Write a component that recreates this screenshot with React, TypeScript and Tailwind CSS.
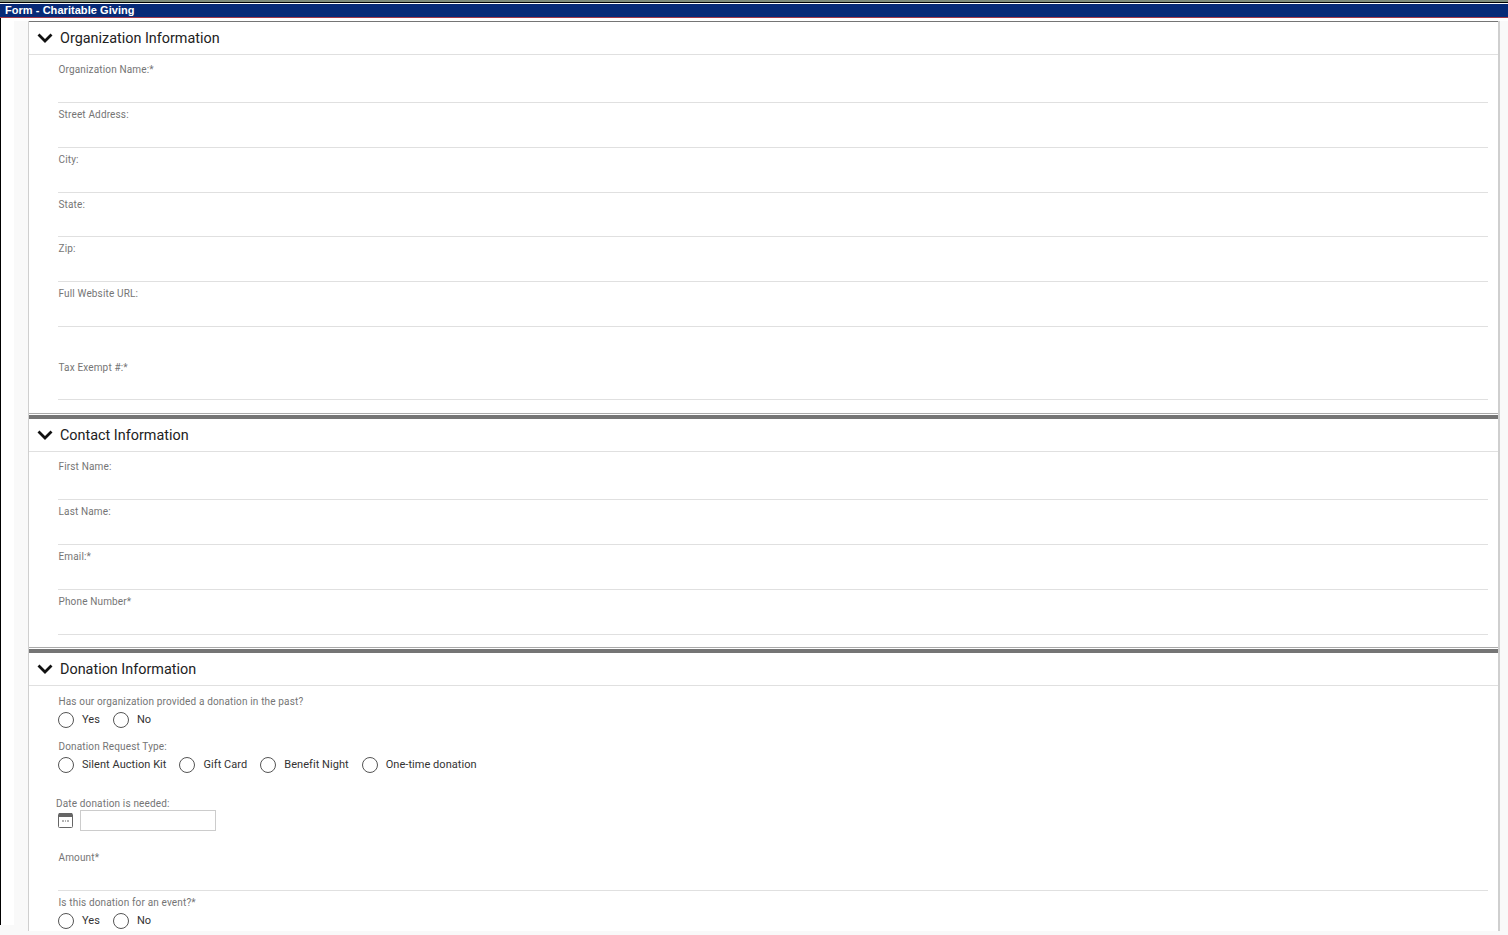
import React from "react";

function Field({ label, className = "" }: { label: string; className?: string }) {
  return (
    <div className={`h-[45px] border-b border-[#e0e0e0] ml-[29px] mr-[10px] pt-[6px] ${className}`}>
      <label className="block pl-[0.5px] text-[10px] leading-[12px] tracking-[0.15px] text-[#757575]">{label}</label>
    </div>
  );
}

function Radio({ label }: { label: string }) {
  return (
    <label className="flex items-center mr-[13px] text-[11px] tracking-[0.05px] text-[#333]">
      <span className="w-[16px] h-[16px] rounded-full border border-[#555] bg-white mr-[8px]" />
      {label}
    </label>
  );
}

function RadioGroup({ label, options, className = "" }: { label: string; options: string[]; className?: string }) {
  return (
    <div className={`ml-[29px] ${className}`}>
      <div className="pl-[0.5px] text-[10px] leading-[12px] tracking-[0.15px] text-[#757575]">{label}</div>
      <div className="flex items-center h-[16px] mt-[4px]">
        {options.map((o) => (
          <Radio key={o} label={o} />
        ))}
      </div>
    </div>
  );
}

function SectionHeader({ title }: { title: string }) {
  return (
    <div className="h-[33px] flex items-center border-b border-[#e0e0e0] pl-[8px]">
      <svg width="16" height="10" viewBox="0 0 16 10" fill="none" className="shrink-0">
        <path d="M1.500 1.500L8 8L14.500 1.500" stroke="#111" strokeWidth="2.800" />
      </svg>
      <h2 className="ml-[7px] pt-[2px] text-[14.4px] text-[#222]">{title}</h2>
    </div>
  );
}

export default function App() {
  return (
    <div className="h-[935px] overflow-hidden bg-[#f9f9f9] font-['Roboto',sans-serif]">
      {/* title bar */}
      <div className="border-t-2 border-[#7f8c7c] bg-white">
        <div className="border-t border-black" />
        <div className="h-[14px] mt-[1px] bg-[#072a77] border-b border-[#a33a4a] pl-[5px] font-['Liberation_Sans',sans-serif] font-bold text-[11px] leading-[12px] tracking-[0.05px] text-white">
          Form - Charitable Giving
        </div>
      </div>
      <div className="h-[3px] bg-white border-l border-black" />

      <div className="flex items-start">
        <div className="w-[14px] h-[904px] shrink-0 bg-white border-l border-black" />

        <div className="flex-1 ml-[14px] mr-[8px] h-[910px] bg-white border-l border-r-2 border-[#cfcfcf] overflow-hidden">
          {/* Organization */}
          <div className="border-t border-[#757575]">
            <SectionHeader title="Organization Information" />
            <div className="pt-[3px]">
              <Field label="Organization Name:*" />
              <Field label="Street Address:" />
              <Field label="City:" />
              <Field label="State:" className="!h-[44px]" />
              <Field label="Zip:" />
              <Field label="Full Website URL:" />
              <Field label="Tax Exempt #:*" className="!h-[48px] !pt-[10px] mt-[25px]" />
            </div>
            <div className="h-[14px] border-b border-[#aaa]" />
          </div>

          {/* Contact */}
          <div className="pt-[1px]">
            <div className="border-t-4 border-[#757575]">
              <SectionHeader title="Contact Information" />
              <div className="pt-[3px]">
                <Field label="First Name:" />
                <Field label="Last Name:" />
                <Field label="Email:*" />
                <Field label="Phone Number*" />
              </div>
              <div className="h-[13px] border-b border-[#aaa]" />
            </div>
          </div>

          {/* Donation */}
          <div className="pt-[1px]">
            <div className="border-t-4 border-[#757575]">
              <SectionHeader title="Donation Information" />
              <RadioGroup label="Has our organization provided a donation in the past?" options={["Yes", "No"]} className="mt-[10px]" />
              <RadioGroup label="Donation Request Type:" options={["Silent Auction Kit", "Gift Card", "Benefit Night", "One-time donation"]} className="mt-[13px]" />

              <div className="ml-[27px] mt-[25px] text-[10px] leading-[12px] tracking-[0.15px] text-[#757575]">Date donation is needed:</div>
              <div className="ml-[29px] flex items-center h-[21px]">
                <svg width="15" height="16" viewBox="0 0 15 16" className="-mt-[2px]">
                  <rect x="0.500" y="1.500" width="14" height="14" rx="1" fill="#fff" stroke="#666" />
                  <path d="M1 1h2v1h2V1h5v1h2V1h2v4H1z" fill="#666" />
                  <path d="M4 9h2M7 9h1M9 9h2" stroke="#666" />
                </svg>
                <div className="ml-[7px] w-[136px] h-[21px] border border-[#ccc] bg-white" />
              </div>

              <Field label="Amount*" className="mt-[14px] !h-[46px] !pt-[7px]" />
              <RadioGroup label="Is this donation for an event?*" options={["Yes", "No"]} className="mt-[6px]" />
            </div>
          </div>
        </div>
      </div>
    </div>
  );
}
